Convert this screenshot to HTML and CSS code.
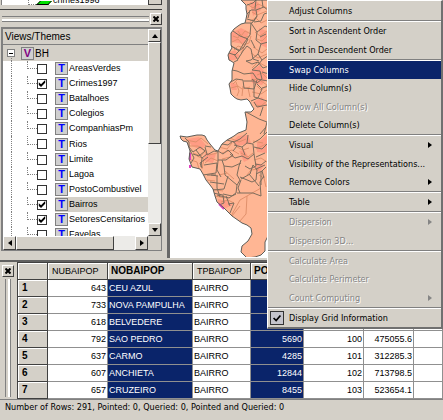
FILE: index.html
```html
<!DOCTYPE html>
<html lang="en">
<head>
<meta charset="utf-8">
<title>BH - Views and Themes</title>
<link rel="stylesheet" href="styles.css">
</head>
<body>
<main class="workspace">
  <aside class="sidebar">
    <div class="prev-tree">
      <div class="prev-list"><i class="prev-branch"></i><i class="leaf"></i><span>crimes1996</span></div>
      <div class="prev-scroll"></div>
    </div>
    <div class="dock-bar"><i class="grip"></i><button class="close" aria-label="Close themes"><svg viewBox="0 0 6 6"><path d="M.5.5l5 5m0-5l-5 5"/></svg></button></div>
    <section class="tree-panel">
      <h2 class="tree-title">Views/Themes</h2>
      <ul class="tree">
        <li class="root"><button class="twist" aria-label="Collapse BH"></button><i class="icon view">V</i><span>BH</span></li>
        <li><input type="checkbox" id="t1"><label for="t1"><i class="icon">T</i>AreasVerdes</label></li>
        <li><input type="checkbox" id="t2" checked><label for="t2"><i class="icon">T</i>Crimes1997</label></li>
        <li><input type="checkbox" id="t3"><label for="t3"><i class="icon">T</i>Batalhoes</label></li>
        <li><input type="checkbox" id="t4"><label for="t4"><i class="icon">T</i>Colegios</label></li>
        <li><input type="checkbox" id="t5"><label for="t5"><i class="icon">T</i>CompanhiasPm</label></li>
        <li><input type="checkbox" id="t6"><label for="t6"><i class="icon">T</i>Rios</label></li>
        <li><input type="checkbox" id="t7"><label for="t7"><i class="icon">T</i>Limite</label></li>
        <li><input type="checkbox" id="t8"><label for="t8"><i class="icon">T</i>Lagoa</label></li>
        <li><input type="checkbox" id="t9"><label for="t9"><i class="icon">T</i>PostoCombustivel</label></li>
        <li><input type="checkbox" id="t10" checked><label for="t10" class="current"><i class="icon">T</i>Bairros</label></li>
        <li><input type="checkbox" id="t11" checked><label for="t11"><i class="icon">T</i>SetoresCensitarios</label></li>
        <li><input type="checkbox" id="t12"><label for="t12"><i class="icon">T</i>Favelas</label></li>
      </ul>
      <div class="vscroll"><button aria-label="Scroll up"><i class="arrow up"></i></button><div class="thumb"></div><div class="track"></div><button aria-label="Scroll down"><i class="arrow down"></i></button></div>
      <div class="hscroll"><button aria-label="Scroll left"><i class="arrow left"></i></button><div class="thumb"></div><div class="track"></div><button aria-label="Scroll right"><i class="arrow right"></i></button></div>
    </section>
  </aside>

  <section class="map">
    <svg class="map-drawing" viewBox="170 0 100 257" aria-label="District map">
      <defs>
        <clipPath id="land"><path id="coast" d="M241 0l3 3 2 2v4l1 5-1 5-1 4-4 1-3 2-4 3-3 4v12l1 3-2 3-2 4 1 5 2 1 3 2-1 4-1 4v9l-3 4 1 4 1 6 3 3 3 2 4 1 6-1 3 3 2 4 2 3-3 3h-6l1 5 1 5-1 8-5 2L238 133l-4 3-7 4-5 4-4 7-3-1-5-6-3-4-2-4-3-1h-5l-5 1-5 1-7-1 1 3 2 2 4 1 3 9-1 8 3 8 8 2 3 5 3 6 4 5 3 4 2 7 2 6 7 6 4 4 4 4 10 7 5 2 4 3 1 6-4 7-6 5-1 6 3 3 3 3 8-1 6-2 4-4v-9l3-6V0z"/></clipPath>
      </defs>
      <use href="#coast" fill="#ffb694"/>
      <g clip-path="url(#land)">
        <g fill="#ff9c84">
          <path d="M231 33l10-5 8 4-5 12-12-2zM250 2l8 0 3 8-8 6zM259 28l10 4v17l-8-4zM228 53l7-3 5 6-5 4-7 0zM250 72l10-7 8 12-6 8-10-2zM230 82l6 2 1 6-5 0zM253 102l9-5 5 8-9 3zM187 139l12-2 7 8-5 5-9-4zM205 153l11 1-3 9-9-2zM232 142l6-6 10-1 3 8-13 3zM257 143l10-8v18l-10-1zM239 151l5-1 6 9-6 3zM256 163l8 2-4 7-5-2zM218 199l9 2 6 4-7 3-8-3z"/>
        </g>
        <path class="tracts" d="M233 36l5 2 2-4 4 4 5-2M232 42l6-3 5 6 6-2 2-7M234 50l4-4 6 2-3 5M238 31l3 5 4-5 6 3M231 88l7-2 4 3 8-2M236 82l3 9-2 5M243 86l-1 10M248 88l2 9M233 84l5-5M247 4l6 4 5-4 9 4M252 12l5 3 10-4M250 21l6-3 5 5 6-3M255 32l5 4 7-5M257 39l5 2 5-5M253 47l9 6 5-4M251 53l7 5 9-4M252 68l6-6 9 5M257 75l5-2 5 5M257 86l4 4 6-5M252 92l9 2 6-4M256 105l5 1 7-6M251 80l7-1 9 6M186 140l10 2 5-4 7 6M189 146l9 0 8 5M193 153l8 3 5-6M191 160l6 2 2 7M197 156l7 3-2 10M204 151l5 4 8-2M205 163l6-5 7 3M207 180l8 1M211 189l12 2M215 196l10 2M221 202l7-2 6 3M218 147l9 2 5-6M222 153l10-3 7 4M222 159l12-3M230 138l9 4 7-3M237 147l6 3 6-2M241 153l7 4 5-4M253 141l10 2M256 149l10-5M254 160l7-2 6 4M225 171l9 8M219 175l8-2M247 196l-7 4-9 16M247 196l-1 18-6 7M247 196l14-8M232 216l8-10M259 175l5 3 2 9M247 175l4-5 8-1"/>
        <path class="districts" d="M247 5l6-2 3-3M247 14l4-4h5l1 6-3 5-7-2M250 10l-2 8M257 16l-5 7-7 0M256 10l8-3 5 4M263 7l-1-7M254 22l7-1 3-7 6-2M256 0l-1 9M251 23l6 9 8-6 5 2M251 23l-1 12-6 8-5 8M233 31l7 5 8 3-4 8-5 4M231 46l8 4M239 51l-5-3-3-3M239 51l-4 4-6-2M234 54l4 6-4 2M238 59l5-8 4-5 4 3 2 10 6 2M257 32l-1 8 5 4-3 10 4 6-4 5M261 44l7-2M260 37l6-3M258 54l-7 6-5 1 6 3 6-2 5 6 6-2M258 65l-6 5 8 1 2 8-5 4-5-4M262 60l7-5M262 72l7 2M255 48l-4-8M232 70l5 1 7 3 9-1 4 6 11 2M229 83l7-4 7 1 1 8 10 1v-8l-10 0M254 89l3-9M254 89l0 8 4 1 4-9-5-5M262 88l7-2M258 98l-7 3M258 98l9 3M254 102l3 5 10-2M246 112l13 7 8 3-3 12M260 116l3-9M260 134l6-7M185 138l4 4 0 5 4 5 7-5 5 4-6 5-6-2M190 150l4 8-3 5M196 150l6 8 5-4-2-7M202 158l-1 9M205 146l6 1M207 155l7-4 4 1M202 168l-2-5 8-6M204 165l13-2-1 10-13 2M218 151l0 10-1 9 4 7M218 151l5 3 5-4 5 5-7 5-8 0M222 144l6 1 5-4 4 5-4 5M227 140l7 2 6-3 7-6M234 145l8 2 5-4 6 1 1 10-6 5-6-3-7 2-5-4M242 147l3 8M247 143l1-8M253 143l7-4 7-7M254 147l8 2 5-5M254 154l2 12-6 3-5-3M256 157l9-4M255 164l6 1 5-4M222 160l2 6 8 1 9-4M224 166l1 9 12 10 3-5-3-5 2-9M239 166l2-6M237 185l-1 8-7 5-12-3M241 179l9-5 3-9 4 5-1 10-4 2-12-5M237 193l16 0 8 3-1-14 4-6M249 174l10 12M241 180l-3 8 2 5M228 176l-4 13-11 1M210 182l14 2M213 193l10 2 1 8-5 2M223 194l9 2 4-2M218 176l-7-1M217 176l0 12 3 9M207 175l9 0M228 204l6-1-4 10M256 174l6-3 2 7M256 169l9-4M261 185l0-13 5-5M226 196l4 10"/>
      </g>
      <path class="accent" d="M190 153v7M190 165v3M219 204l5 5"/>
      <use href="#coast" class="coast"/>
    </svg>
  </section>
</main>

<section class="grid-pane">
  <div class="side-dock"><button class="close" aria-label="Close grid"><svg viewBox="0 0 6 6"><path d="M.5.5l5 5m0-5l-5 5"/></svg></button><i class="grip"></i></div>
  <div class="table-wrap">
  <table>
    <colgroup><col class="c0"><col class="c1"><col class="c2"><col class="c3"><col class="c4"><col class="c5"><col class="c6"><col></colgroup>
    <thead><tr><th></th><th>NUBAIPOP</th><th class="picked">NOBAIPOP</th><th>TPBAIPOP</th><th class="picked">PO</th><th></th><th></th><th></th></tr></thead>
    <tbody>
      <tr><th>1</th><td class="num">643</td><td class="sel">CEU AZUL</td><td>BAIRRO</td><td class="num sel"></td><td></td><td></td><td></td></tr>
      <tr><th>2</th><td class="num">733</td><td class="sel">NOVA PAMPULHA</td><td>BAIRRO</td><td class="num sel"></td><td></td><td></td><td></td></tr>
      <tr><th>3</th><td class="num">618</td><td class="sel">BELVEDERE</td><td>BAIRRO</td><td class="num sel"></td><td></td><td></td><td></td></tr>
      <tr><th>4</th><td class="num">792</td><td class="sel">SAO PEDRO</td><td>BAIRRO</td><td class="num sel">5690</td><td class="num">100</td><td class="num">475055.6</td><td></td></tr>
      <tr><th>5</th><td class="num">637</td><td class="sel">CARMO</td><td>BAIRRO</td><td class="num sel">4285</td><td class="num">101</td><td class="num">312285.3</td><td></td></tr>
      <tr><th>6</th><td class="num">607</td><td class="sel">ANCHIETA</td><td>BAIRRO</td><td class="num sel">12844</td><td class="num">102</td><td class="num">713798.5</td><td></td></tr>
      <tr><th>7</th><td class="num">657</td><td class="sel">CRUZEIRO</td><td>BAIRRO</td><td class="num sel">8455</td><td class="num">103</td><td class="num">523654.1</td><td></td></tr>
    </tbody>
  </table>
  </div>
</section>

<footer class="status">Number of Rows: 291, Pointed: 0, Queried: 0, Pointed and Queried: 0</footer>

<div class="menu" role="menu">
  <button role="menuitem">Adjust Columns</button>
  <hr>
  <button role="menuitem">Sort in Ascendent Order</button>
  <button role="menuitem">Sort in Descendent Order</button>
  <hr>
  <button role="menuitem" class="active">Swap Columns</button>
  <button role="menuitem">Hide Column(s)</button>
  <button role="menuitem" disabled>Show All Column(s)</button>
  <button role="menuitem">Delete Column(s)</button>
  <hr>
  <button role="menuitem">Visual<i class="more"></i></button>
  <button role="menuitem">Visibility of the Representations...</button>
  <button role="menuitem">Remove Colors<i class="more"></i></button>
  <hr>
  <button role="menuitem">Table<i class="more"></i></button>
  <hr>
  <button role="menuitem" disabled>Dispersion<i class="more"></i></button>
  <button role="menuitem" disabled>Dispersion 3D...</button>
  <hr>
  <button role="menuitem" disabled>Calculate Area</button>
  <button role="menuitem" disabled>Calculate Perimeter</button>
  <button role="menuitem" disabled>Count Computing<i class="more"></i></button>
  <hr>
  <button role="menuitemcheckbox" aria-checked="true"><svg class="tick" viewBox="0 0 14 14"><path d="M3 7l3 3 5-6"/></svg>Display Grid Information</button>
</div>
</body>
</html>
```
FILE: styles.css
```css
:root {
  --face: #d4d0c8;
  --shade: #808080;
  --dark: #404040;
  --navy: #0a246a;
  --grid-font: "Liberation Sans", sans-serif;
  --ui: "DejaVu Sans Condensed", "Open Sans", sans-serif;
}

* { box-sizing: border-box; }

body {
  margin: 0;
  min-height: 100vh;
  display: flex;
  flex-direction: column;
  position: relative;
  overflow: hidden;
  background: var(--face);
  color: #000;
  font: 9px/15px var(--grid-font);
}

button {
  padding: 0;
  border: 1px solid;
  border-color: #fff var(--dark) var(--dark) #fff;
  background: var(--face);
  display: flex;
  align-items: center;
  justify-content: center;
}

i { font-style: normal; }

.workspace { display: flex; height: 258px; }

/* Sidebar */
.sidebar {
  flex: none;
  width: 170px;
  display: flex;
  flex-direction: column;
  padding-right: 5px;
  border-right: 3px solid #686868;
}

.prev-tree {
  display: flex;
  height: 5px;
  margin-left: 1px;
  border-left: 1px solid var(--shade);
  background: #fff;
}
.prev-list {
  flex: 1;
  display: flex;
  align-items: flex-end;
  height: 5px;
  padding-left: 26px;
  overflow: hidden;
  line-height: 9px;
}
.prev-branch { width: 8px; height: 5px; border: dotted var(--shade); border-width: 0 0 1px 1px; }
.leaf { width: 12px; height: 4px; margin: 0 3px 0 2px; background: #00e000; border: 1px solid #000; border-top: 0; transform: skewX(-45deg); flex: none; }
.prev-scroll { width: 14px; background: var(--face); border: solid var(--dark); border-width: 0 1px 1px; }

.dock-bar {
  display: flex;
  align-items: center;
  gap: 1px;
  height: 18px;
  margin-top: 4px;
  padding-left: 2px;
  border-top: 1px solid var(--dark);
}
.dock-bar .grip { flex: 1; height: 6px; border: solid var(--shade); border-width: 1px 0; background: #fff; box-shadow: inset 0 2px var(--face); }
.close { width: 12px; height: 12px; flex: none; }
.close svg { width: 6px; height: 6px; stroke: #000; stroke-width: 2; fill: none; }

.tree-panel {
  flex: none;
  display: grid;
  grid-template: 16px 191px 14px / 1fr 13px;
  margin-left: 1px;
  border: 2px solid var(--shade);
  border-width: 2px 1px 1px 2px;
  background: #fff;
}
.tree-title {
  margin: 0;
  padding-left: 2px;
  font-size: 10px;
  font-weight: normal;
  background: var(--face);
  border-bottom: 1px solid var(--shade);
}
.tree {
  grid-area: 2 / 1;
  overflow: hidden;
  margin: 0;
  padding: 0;
  list-style: none;
  display: grid;
  grid-template-rows: 16px repeat(5, 15px) 16px repeat(5, 15px) 15px;
}
.tree li { display: flex; align-items: center; padding-left: 24px; white-space: nowrap; position: relative; }
.tree li::before { content: ""; align-self: stretch; width: 9px; margin-bottom: 7px; border: dotted var(--shade); border-width: 0 0 1px 1px; }
.tree li::after { content: ""; position: absolute; left: 8px; top: 0; bottom: 0; border-left: 1px dotted var(--shade); }
.tree .root { padding-left: 4px; background: var(--face); gap: 1px; font-size: 10px; }
.tree .root::before { display: none; }
.tree .root::after { top: 11px; }
.twist { width: 8px; height: 8px; margin-right: 5px; border-color: var(--shade); background: linear-gradient(#000, #000) center / 4px 1px no-repeat #fff; }
.tree input {
  appearance: none;
  width: 10px;
  height: 10px;
  margin: 0 8px 0 0;
  border: 1px solid #333;
  background: #fff;
  flex: none;
}
.tree input:checked::before { content: ""; display: block; height: 8px; background: #000; clip-path: polygon(10% 35%, 38% 60%, 90% 5%, 90% 40%, 38% 95%, 10% 70%); }
.tree label { display: flex; align-items: center; gap: 1px; flex: 1; }
.current { background: var(--face); }
.icon {
  width: 13px;
  height: 13px;
  border: 1px solid var(--shade);
  background: #d0d0d0;
  color: #00f;
  font: bold 11px/11px "Liberation Sans", sans-serif;
  text-align: center;
  flex: none;
}
.icon.view { color: #800080; }

.vscroll { grid-area: 1 / 2 / 3 / 3; display: grid; grid-template-rows: 13px 102px 1fr 13px; }
.hscroll { grid-area: 3 / 1 / 4 / 2; display: grid; grid-template-columns: 13px 98px 1fr 13px; }
.tree-panel::after { content: ""; grid-area: 3 / 2; background: var(--face); }
.thumb { background: var(--face); border: 1px solid; border-color: #fff var(--dark) var(--dark) #fff; }
.track { background: #ecebe8; }
.arrow { border: 3px solid transparent; }
.arrow.up { border-top: 0; border-bottom: 4px solid #000; }
.arrow.down { border-bottom: 0; border-top: 4px solid #000; }
.arrow.left { border-left: 0; border-right: 4px solid #000; }
.arrow.right { border-right: 0; border-left: 4px solid #000; }

/* Map */
.map { flex: 1; min-width: 0; overflow: hidden; background: #fff; }
.map-drawing { display: block; width: 100px; height: 257px; }
.coast { fill: none; stroke: #5d5d58; stroke-width: 1; }
.districts { fill: none; stroke: #7d6c5c; stroke-width: 1; }
.tracts { fill: none; stroke: #e0906c; stroke-width: 1; }
.accent { fill: none; stroke: #e040c0; stroke-width: 2; }

/* Grid */
.grid-pane {
  display: flex;
  border-top: 2px solid #606060;
  margin-top: 2px;
  height: 137px;
}
.side-dock { width: 17px; flex: none; display: flex; flex-direction: column; gap: 2px; padding: 3px 0 0 2px; }
.side-dock .grip { flex: 1; width: 6px; margin-left: 3px; border: solid var(--shade); border-width: 0 1px; background: #fff; box-shadow: inset 2px 0 var(--face); }

.table-wrap { flex: 1; min-width: 0; }
table {
  width: 100%;
  table-layout: fixed;
  border-collapse: separate;
  border-spacing: 0;
  border: solid var(--dark);
  border-width: 1px 0 0 1px;
  background: #fff;
  line-height: 16px;
}
.c0 { width: 30px; }
.c1 { width: 60px; }
.c2 { width: 85px; }
.c3 { width: 58px; }
.c4 { width: 53px; }
.c5 { width: 60px; }
.c6 { width: 50px; }
th, td { height: 17px; padding: 0 1px; border: solid #909090; border-width: 0 1px 1px 0; overflow: hidden; white-space: nowrap; text-align: left; }
th { padding: 0 4px; font-weight: normal; background: var(--face); border-color: var(--dark); box-shadow: inset 1px 1px #fff; }
tbody th, .picked { font-weight: bold; font-size: 10px; }
.picked { padding: 0 3px; }
.num { text-align: right; }
.sel { background: var(--navy); color: #fff; }

.status {
  flex: 1;
  margin-top: 2px;
  padding: 0 5px;
  border-top: 1px solid var(--shade);
  font: 9px/15px var(--ui);
}

/* Context menu */
.menu {
  position: absolute;
  top: 0;
  right: 0;
  width: 176px;
  height: 329px;
  display: flex;
  flex-direction: column;
  padding-top: 1px;
  background: var(--face);
  border: solid;
  border-width: 1px 2px 2px 1px;
  border-color: #fff #707070 #707070 #fff;
}
.menu button {
  flex: 1;
  min-height: 0;
  position: relative;
  justify-content: flex-start;
  border: 0;
  padding-left: 21px;
  font: 9px/12px var(--ui);
  color: #000;
  white-space: nowrap;
}
.menu .active { background: var(--navy); color: #fff; }
.menu button:disabled { color: #858585; text-shadow: 1px 1px #fff; }
.menu hr { flex: none; width: 100%; height: 2px; margin: 0; border: solid; border-width: 1px 0; border-color: var(--shade) #fff #fff; }
.more { margin-left: auto; margin-right: 9px; border: 3px solid transparent; border-left: 4px solid; border-right: 0; }
.tick { position: absolute; left: 2px; width: 14px; height: 14px; border: 1px solid #333; background: #c4c4cc; fill: none; stroke: #000; stroke-width: 2; }
```
